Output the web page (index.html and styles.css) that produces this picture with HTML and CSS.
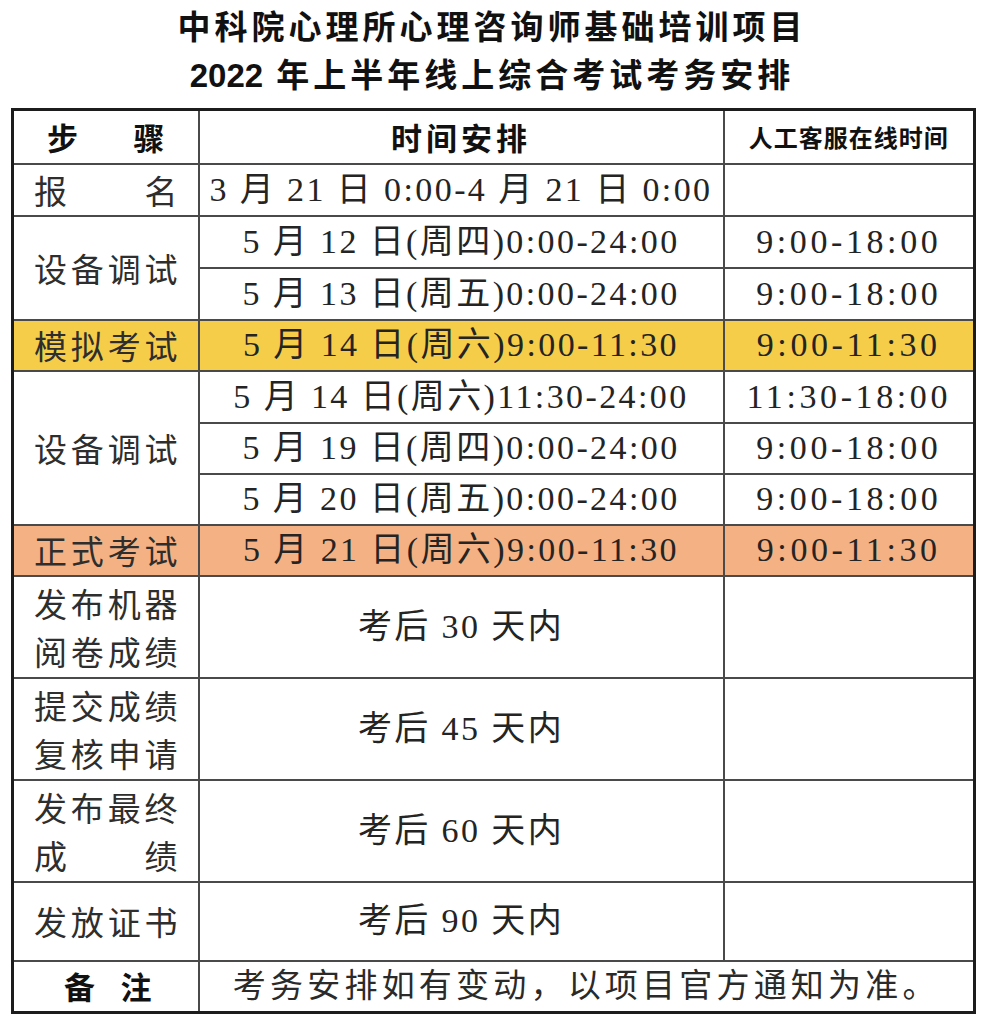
FILE: index.html
```html
<!DOCTYPE html>
<html lang="zh-CN">
<head>
<meta charset="utf-8">
<title>考务安排</title>
<link rel="stylesheet" href="styles.css">
</head>
<body>
<div class="page">
  <header class="title">
    <div class="title-line">中科院心理所心理咨询师基础培训项目</div>
    <div class="title-line"><span class="year">2022</span> 年上半年线上综合考试考务安排</div>
  </header>
  <table class="schedule">
    <colgroup>
      <col class="c1">
      <col class="c2">
      <col class="c3">
    </colgroup>
    <tr class="row-head">
      <th class="step head-step">步 骤</th>
      <th class="head-time">时间安排</th>
      <th class="head-service">人工客服在线时间</th>
    </tr>
    <tr class="row-52">
      <td class="step">报 名</td>
      <td class="time">3 月 21 日 0:00-4 月 21 日 0:00</td>
      <td class="svc"></td>
    </tr>
    <tr class="row-52">
      <td class="step" rowspan="2">设备调试</td>
      <td class="time">5 月 12 日(周四)0:00-24:00</td>
      <td class="svc">9:00-18:00</td>
    </tr>
    <tr class="row-52">
      <td class="time">5 月 13 日(周五)0:00-24:00</td>
      <td class="svc">9:00-18:00</td>
    </tr>
    <tr class="row-51 mock">
      <td class="step">模拟考试</td>
      <td class="time">5 月 14 日(周六)9:00-11:30</td>
      <td class="svc">9:00-11:30</td>
    </tr>
    <tr class="row-52">
      <td class="step" rowspan="3">设备调试</td>
      <td class="time">5 月 14 日(周六)11:30-24:00</td>
      <td class="svc">11:30-18:00</td>
    </tr>
    <tr class="row-51">
      <td class="time">5 月 19 日(周四)0:00-24:00</td>
      <td class="svc">9:00-18:00</td>
    </tr>
    <tr class="row-51">
      <td class="time">5 月 20 日(周五)0:00-24:00</td>
      <td class="svc">9:00-18:00</td>
    </tr>
    <tr class="row-51 formal">
      <td class="step">正式考试</td>
      <td class="time">5 月 21 日(周六)9:00-11:30</td>
      <td class="svc">9:00-11:30</td>
    </tr>
    <tr class="row-102">
      <td class="step">发布机器<br>阅卷成绩</td>
      <td class="time">考后 30 天内</td>
      <td class="svc"></td>
    </tr>
    <tr class="row-102">
      <td class="step">提交成绩<br>复核申请</td>
      <td class="time">考后 45 天内</td>
      <td class="svc"></td>
    </tr>
    <tr class="row-102">
      <td class="step">发布最终<br>成 绩</td>
      <td class="time">考后 60 天内</td>
      <td class="svc"></td>
    </tr>
    <tr class="row-79">
      <td class="step">发放证书</td>
      <td class="time">考后 90 天内</td>
      <td class="svc"></td>
    </tr>
    <tr class="row-52">
      <th class="step note-label">备 注</th>
      <td class="time note" colspan="2">考务安排如有变动，以项目官方通知为准。</td>
    </tr>
  </table>
</div>
</body>
</html>
```
FILE: styles.css
```css
html, body {
  margin: 0;
  padding: 0;
  background: #ffffff;
}

.page {
  padding: 4px 0 0 11px;
  color: #1e1e1e;
  font-family: "Liberation Serif", "Noto Sans CJK SC", serif;
}

.title {
  width: 962px;
  text-align: center;
  font-family: "Liberation Sans", "Noto Sans CJK SC", sans-serif;
  font-weight: 700;
  font-size: 33px;
  letter-spacing: 4px;
  line-height: 48px;
  color: #111;
  margin-bottom: 8px;
}

.year {
  letter-spacing: 0;
}

.schedule {
  width: 962px;
  border-collapse: collapse;
  table-layout: fixed;
  border: 3px solid #1c1c1c;
}

.c1 { width: 186px; }
.c2 { width: 525px; }
.c3 { width: 251px; }

.schedule th,
.schedule td {
  border: 2px solid #4a4a4a;
  padding: 0;
  vertical-align: middle;
  text-align: center;
  font-weight: 400;
}

.row-head { height: 54px; }
.row-52 { height: 52px; }
.row-51 { height: 51px; }
.row-102 { height: 102px; }
.row-79 { height: 79px; }

.step {
  font-family: "Noto Sans CJK SC", sans-serif;
  font-size: 33px;
  line-height: 48px;
  color: #2e2e2e;
  text-align: justify;
  text-align-last: justify;
  padding: 0 20px !important;
}

.head-step {
  font-weight: 700 !important;
  font-size: 31px;
  color: #111;
  padding: 0 33px !important;
}

.head-time {
  font-family: "Noto Sans CJK SC", sans-serif;
  font-weight: 700 !important;
  font-size: 31px;
  letter-spacing: 4px;
  color: #111;
}

.head-service {
  font-family: "Noto Sans CJK SC", sans-serif;
  font-weight: 700 !important;
  font-size: 24px;
  letter-spacing: 1px;
  color: #111;
}

.time,
.svc {
  font-size: 34px;
  line-height: 40px;
  letter-spacing: 2.4px;
  color: #242424;
  white-space: nowrap;
}

.svc {
  letter-spacing: 3.6px;
}

.mock td { background: #f6cd48; }
.formal td { background: #f4b183; }

.note-label {
  font-weight: 700 !important;
  font-size: 31px;
  color: #111;
  padding: 0 46px 0 50px !important;
}

.note {
  font-size: 33px;
  letter-spacing: 4.2px;
  color: #2a2a2a;
}
```
